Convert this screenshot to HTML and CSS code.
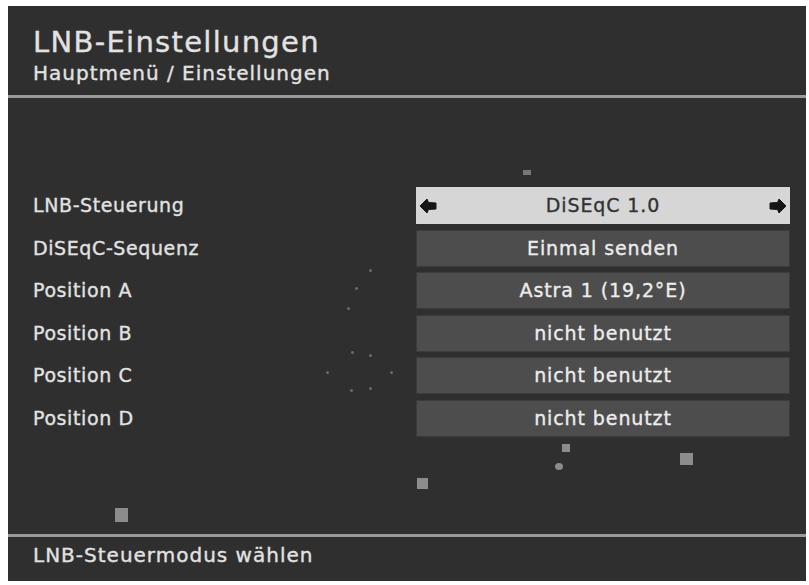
FILE: index.html
```html
<!DOCTYPE html>
<html lang="de">
<head>
<meta charset="utf-8">
<title>LNB-Einstellungen</title>
<link rel="stylesheet" href="styles.css">
</head>
<body>
<div class="screen">
  <header class="head">
    <h1 class="title">LNB-Einstellungen</h1>
    <div class="crumb">Hauptmenü / Einstellungen</div>
  </header>
  <main class="body">
    <div class="menu">
      <div class="label">LNB-Steuerung</div>
      <div class="value active">
        <svg class="arr" viewBox="0 0 18 16" width="18" height="16"><path d="M1 8 L8 1 L9.5 4.5 L17 5 L17 11 L9.5 11.5 L8 15 Z" fill="#161616" stroke="#161616" stroke-width="1" stroke-linejoin="round"/></svg>
        <span>DiSEqC 1.0</span>
        <svg class="arr" viewBox="0 0 18 16" width="18" height="16"><path d="M17 8 L10 1 L8.5 4.5 L1 5 L1 11 L8.5 11.5 L10 15 Z" fill="#161616" stroke="#161616" stroke-width="1" stroke-linejoin="round"/></svg>
      </div>
      <div class="label">DiSEqC-Sequenz</div>
      <div class="value">Einmal senden</div>
      <div class="label">Position A</div>
      <div class="value">Astra 1 (19,2°E)</div>
      <div class="label">Position B</div>
      <div class="value">nicht benutzt</div>
      <div class="label">Position C</div>
      <div class="value">nicht benutzt</div>
      <div class="label">Position D</div>
      <div class="value">nicht benutzt</div>
    </div>
    <span class="dot sq s1"></span>
    <span class="dot sq s2"></span>
    <span class="dot sq s3"></span>
    <span class="dot sq s4"></span>
    <span class="dot rd s5"></span>
    <span class="dot sq s6"></span>
    <span class="dot f f1"></span>
    <span class="dot f f2"></span>
    <span class="dot f f3"></span>
    <span class="dot f f4"></span>
    <span class="dot f f5"></span>
    <span class="dot f f6"></span>
    <span class="dot f f7"></span>
    <span class="dot f f8"></span>
    <span class="dot f f9"></span>
  </main>
  <footer class="foot">LNB-Steuermodus wählen</footer>
</div>
</body>
</html>
```
FILE: styles.css
```css
html, body {
  margin: 0;
  padding: 0;
  background: #ffffff;
}
body {
  width: 809px;
  height: 585px;
  overflow: hidden;
  font-family: "DejaVu Sans", "Liberation Sans", sans-serif;
}
.screen {
  margin: 6px 3px 0 8px;
  width: 798px;
  height: 575px;
  background: #2f2f2f;
  display: flex;
  flex-direction: column;
  color: #e2e2e2;
  -webkit-text-stroke: 0.35px currentColor;
}
.head {
  height: 89px;
  padding: 0 0 0 25px;
  border-bottom: 3px solid #9a9a9a;
  box-sizing: content-box;
}
.title {
  margin: 0;
  padding-top: 18px;
  font-size: 29px;
  font-weight: normal;
  line-height: 36px;
  letter-spacing: 1.3px;
}
.crumb {
  font-size: 20px;
  line-height: 24px;
  margin-top: 1px;
  letter-spacing: 1px;
}
.body {
  position: relative;
  flex: 1;
}
.menu {
  display: grid;
  grid-template-columns: 383px 374px;
  grid-auto-rows: 37px;
  row-gap: 5.6px;
  padding: 89px 0 0 25px;
}
.label {
  font-size: 19px;
  line-height: 37px;
  letter-spacing: 0.6px;
  white-space: nowrap;
}
.value {
  background: #4d4d4d;
  box-shadow: inset 0 0 0 1px #3b3b3b;
  text-align: center;
  font-size: 19px;
  line-height: 37px;
  letter-spacing: 0.9px;
  color: #ececec;
}
.value.active {
  background: #d6d6d6;
  color: #333333;
  box-shadow: none;
  display: flex;
  align-items: center;
  justify-content: space-between;
  padding: 0 3px;
}
.arr {
  display: block;
}
.foot {
  border-top: 3px solid #9a9a9a;
  height: 44px;
  padding-left: 25px;
  font-size: 20px;
  line-height: 36px;
  letter-spacing: 1px;
}
.dot {
  position: absolute;
  background: #8c8c8c;
}
.sq.s1 { left: 515px; top: 72px; width: 8px; height: 5px; background: #777; }
.sq.s2 { left: 107px; top: 410px; width: 13px; height: 14px; }
.sq.s3 { left: 409px; top: 380px; width: 11px; height: 11px; }
.sq.s4 { left: 554px; top: 346px; width: 8px; height: 8px; }
.rd.s5 { left: 547px; top: 365px; width: 8px; height: 7px; border-radius: 50%; }
.sq.s6 { left: 672px; top: 355px; width: 13px; height: 12px; }
.f { width: 3px; height: 3px; border-radius: 50%; background: #6a6a6a; }
.f1 { left: 361px; top: 171px; }
.f2 { left: 347px; top: 189px; }
.f3 { left: 339px; top: 209px; }
.f4 { left: 343px; top: 253px; }
.f5 { left: 361px; top: 256px; }
.f6 { left: 318px; top: 273px; }
.f7 { left: 382px; top: 273px; }
.f8 { left: 342px; top: 291px; }
.f9 { left: 361px; top: 289px; }
```
